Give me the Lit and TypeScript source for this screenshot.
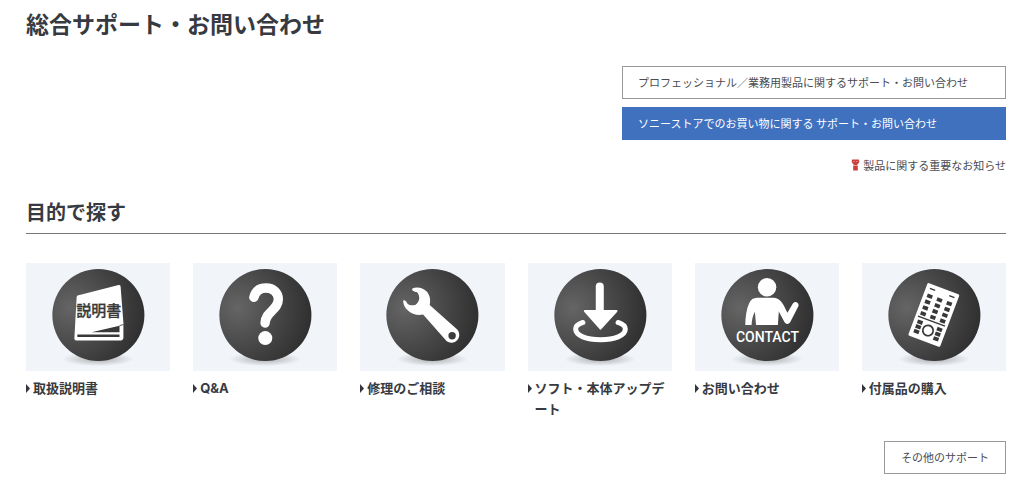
import { LitElement, html, svg, css } from "lit";
import { customElement, property } from "lit/decorators.js";

const pictures = {
  manual: svg`
    <path fill="#fff" d="M51.5 32.5 L92.5 22 Q94.3 21.6 94.5 23.4 L97.4 61 Q97.3 62.5 97.3 64 V74.5 Q97.3 77.3 94.5 77.3 H50.3 Q48.3 77.3 48.3 75.3 L50.6 33.6 Z"/>
    <path fill="#383838" d="M65.5 69.3 L93.4 62.6 V69.3 Z"/>
    <path fill="#383838" d="M51.3 71.4 H93.4 V74 H51.3 Z"/>
    <path stroke="#383838" stroke-width=".8" d="M93.4 62.6 L97.6 61.4"/>
    <text class="jp" x="72.6" y="53" text-anchor="middle">説明書</text>`,
  question: svg`
    <path fill="none" stroke="#fff" stroke-width="9.4" stroke-linecap="round" d="M60.8 34.3 C62.5 27.5 67.5 25 73 25 C80.2 25 85.2 29.8 85.2 36.3 C85.2 47 72.3 48.5 72 60"/>
    <circle cx="72.2" cy="75" r="7" fill="#fff"/>`,
  wrench: svg`
    <path fill="#fff" fill-rule="evenodd" d="M52 25.6 C56.5 23.2 62.6 24.4 66.4 28.2 C70.2 32 70.6 37.6 69.6 42 L97.4 66.6 A8 8 0 0 1 86.6 78.2 L63 51.5 C58.4 52.6 52.6 51.7 48.4 48 C44.5 44.6 42.8 40.6 43.2 37.4 C45 36.9 46.4 38.6 47.6 41 C49.5 42.4 53 42.7 55.6 41.6 C57.8 39.8 59.3 37.3 59.2 34.6 C58.8 32 58.2 30 56.6 28.9 C54.4 28.7 51.8 27.7 52 25.6 Z M92 69 A3.7 3.7 0 1 0 92 76.4 A3.7 3.7 0 1 0 92 69 Z"/>`,
  download: svg`
    <path fill="none" stroke="#fff" stroke-width="5" stroke-linecap="round" d="M54.8 59.4 C50 61 47.6 63.4 47.6 66 C47.6 72.6 58.4 76.6 72.4 76.6 C86.4 76.6 97.2 72.6 97.2 66 C97.2 63.4 94.8 61 90 59.4"/>
    <path stroke="#fff" stroke-width="8" stroke-linecap="round" d="M71.7 23.6 V50"/>
    <path fill="#fff" stroke="#fff" stroke-width="2" stroke-linejoin="round" d="M56.8 48 H88.4 L72.4 65.6 Z"/>`,
  contact: svg`
    <circle cx="72" cy="24.2" r="9.2" fill="#fff"/>
    <path fill="#fff" d="M62 34.8 H78.5 C83.5 35 86.5 38.6 88.4 42 L92.3 49.6 L97.6 40.8 C99 38.6 101 38.7 102.3 39.6 C103.6 40.6 103.8 42.2 103 43.8 L95.3 58.8 C94 61.4 90.8 61.6 89.3 59 L83.7 48.5 L82.8 62 H61 L59.8 48.6 C57.4 53 56.8 57 56.5 62 H50.2 C50.4 54 51.3 46 54.2 40 C55.8 36.6 58.4 34.9 62 34.8 Z"/>
    <text class="en" x="72.4" y="79" text-anchor="middle">CONTACT</text>`,
  remote: svg`
    <g transform="translate(65.7 19.7) rotate(20.6)">
      <rect width="34" height="56" rx="1.4" fill="#fff"/>
      <path stroke="#383838" stroke-width="1.4" d="M4 4.6 H9.6 M24.6 4.6 H30.2 M2.6 34.6 H31.4"/>
      ${[6.6, 17, 27.4].map((u) =>
        [12, 18.2, 24.4, 30.6].map(
          (v) => svg`<rect x=${u - 2.7} y=${v - 1.9} width="5.4" height="3.8" fill="#383838"/>`
        )
      )}
      ${[6.6, 27.4].map((u) =>
        [39.6, 44.6, 49.6].map(
          (v) => svg`<rect x=${u - 2.7} y=${v - 1.9} width="5.4" height="3.8" fill="#383838"/>`
        )
      )}
      <circle cx="17" cy="44.6" r="5.2" fill="none" stroke="#383838" stroke-width="1.7"/>
    </g>`,
};

type PictureName = keyof typeof pictures;

@customElement("support-card")
class SupportCard extends LitElement {
  @property() label = "";
  @property() picture: PictureName = "manual";

  static styles = css`
    :host {
      display: block;
      min-width: 0;
    }
    .card {
      display: block;
      color: #373a40;
      text-decoration: none;
    }
    .picture {
      display: block;
      width: 100%;
      background: #f1f5fa;
    }
    .jp {
      font: 500 15px "Noto Sans CJK JP", sans-serif;
      fill: #383838;
      stroke: #383838;
      stroke-width: 0.3px;
    }
    .en {
      font: 500 14px Roboto, sans-serif;
      fill: #fff;
    }
    .label {
      display: flex;
      gap: 3px;
      margin-top: 7px;
      font-family: Inter, "Noto Sans CJK JP", sans-serif;
      font-size: 13px;
      font-weight: 700;
      line-height: 21px;
      line-break: anywhere;
    }
    .arrow {
      flex: none;
      width: 4px;
      height: 21px;
    }
  `;

  render() {
    return html`
      <a class="card" href="#">
        <svg class="picture" viewBox="0 0 144 108" aria-hidden="true">
          <defs>
            <radialGradient id="ball" cx="0.2" cy="0.42" r="0.8">
              <stop offset="0" stop-color="#656565" />
              <stop offset="0.5" stop-color="#4a4a4a" />
              <stop offset="1" stop-color="#303030" />
            </radialGradient>
            <radialGradient id="shade">
              <stop offset="0" stop-color="#999" stop-opacity="0.8" />
              <stop offset="1" stop-color="#999" stop-opacity="0" />
            </radialGradient>
          </defs>
          <ellipse cx="72" cy="96" rx="36" ry="7" fill="url(#shade)" />
          <circle cx="72.3" cy="52" r="46" fill="url(#ball)" />
          ${pictures[this.picture]}
        </svg>
        <span class="label">
          <svg class="arrow" viewBox="0 0 4 21" aria-hidden="true">
            <path fill="#33363d" d="M0 6 L4 10.5 L0 15 Z" />
          </svg>
          <span>${this.label}</span>
        </span>
      </a>
    `;
  }
}

@customElement("app-root")
class AppRoot extends LitElement {
  static styles = css`
    :host {
      display: block;
      padding: 6px 18px 8px 26px;
      background: #fff;
      color: #373a40;
      font-family: "Noto Sans CJK JP", sans-serif;
    }
    .title {
      margin: 0;
      font-size: 23px;
      font-weight: 700;
      line-height: 34px;
    }
    .links {
      display: flex;
      flex-direction: column;
      align-items: flex-end;
      gap: 8px;
      margin-top: 26px;
    }
    .button {
      box-sizing: border-box;
      min-width: 122px;
      padding: 7px 15px;
      border: 1px solid #999;
      background: #fff;
      color: #4a4c52;
      font-size: 11px;
      line-height: 17px;
      text-align: center;
      text-decoration: none;
    }
    .wide {
      width: 384px;
      max-width: 100%;
      text-align: left;
    }
    .store {
      border-color: #4071bf;
      background: #4071bf;
      color: #fff;
    }
    .notice {
      display: flex;
      align-items: center;
      gap: 3px;
      margin-top: 6px;
      color: #4a4c52;
      font-size: 11px;
      line-height: 22px;
      text-decoration: none;
    }
    .alert {
      width: 9px;
      height: 12px;
    }
    .heading {
      margin: 21px 0 0;
      padding-bottom: 6px;
      border-bottom: 1px solid #77797c;
      font-size: 20px;
      font-weight: 700;
      line-height: 30px;
    }
    .cards {
      display: grid;
      grid-template-columns: repeat(6, 1fr);
      gap: 23px;
      margin-top: 29px;
    }
    .more {
      display: flex;
      justify-content: flex-end;
      margin-top: 21px;
    }
  `;

  private cards: { label: string; picture: PictureName }[] = [
    { label: "取扱説明書", picture: "manual" },
    { label: "Q&A", picture: "question" },
    { label: "修理のご相談", picture: "wrench" },
    { label: "ソフト・本体アップデート", picture: "download" },
    { label: "お問い合わせ", picture: "contact" },
    { label: "付属品の購入", picture: "remote" },
  ];

  render() {
    return html`
      <main lang="ja">
        <h1 class="title">総合サポート・お問い合わせ</h1>
        <nav class="links">
          <a class="button wide" href="#">プロフェッショナル／業務用製品に関するサポート・お問い合わせ</a>
          <a class="button wide store" href="#">ソニーストアでのお買い物に関する サポート・お問い合わせ</a>
          <a class="notice" href="#">
            <svg class="alert" viewBox="0 0 9 12" aria-hidden="true">
              <path fill="#c9403d" d="M1.2 0.4 H7.8 Q9 2.2 7.8 4 L6 6 H3 L1.2 4 Q0 2.2 1.2 0.4 Z M2.2 6.6 H6.8 V11.6 H2.2 Z" />
              <path stroke="#f0b5b0" stroke-width="0.8" d="M2.4 2.6 H3.6 M5.4 2.6 H6.6" />
            </svg>
            <span>製品に関する重要なお知らせ</span>
          </a>
        </nav>
        <h2 class="heading">目的で探す</h2>
        <section class="cards">
          ${this.cards.map(
            (c) => html`<support-card .label=${c.label} .picture=${c.picture}></support-card>`
          )}
        </section>
        <div class="more">
          <a class="button" href="#">その他のサポート</a>
        </div>
      </main>
    `;
  }
}
